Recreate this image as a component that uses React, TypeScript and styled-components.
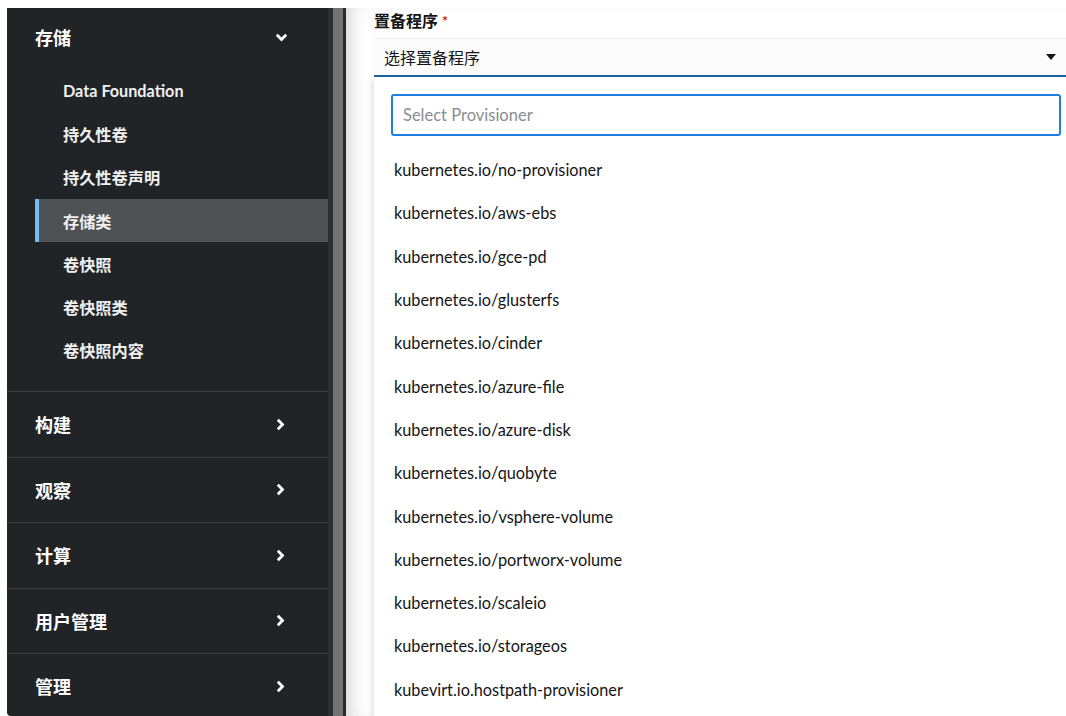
import React from 'react'
import styled, { createGlobalStyle } from 'styled-components'

const FONT = `'Lato', 'Noto Sans CJK SC', sans-serif`

const PROVISIONERS = [
  'kubernetes.io/no-provisioner',
  'kubernetes.io/aws-ebs',
  'kubernetes.io/gce-pd',
  'kubernetes.io/glusterfs',
  'kubernetes.io/cinder',
  'kubernetes.io/azure-file',
  'kubernetes.io/azure-disk',
  'kubernetes.io/quobyte',
  'kubernetes.io/vsphere-volume',
  'kubernetes.io/portworx-volume',
  'kubernetes.io/scaleio',
  'kubernetes.io/storageos',
  'kubevirt.io.hostpath-provisioner'
]

const STORAGE_LINKS = ['Data Foundation', '持久性卷', '持久性卷声明', '存储类', '卷快照', '卷快照类', '卷快照内容']
const ACTIVE_LINK = '存储类'
const SECTIONS = ['构建', '观察', '计算', '用户管理', '管理']

const GlobalStyle = createGlobalStyle`
  html, body {
    margin: 0;
    background: #fff;
    font-family: ${FONT};
    overflow: hidden;
  }
`

const Layout = styled.div`
  display: flex;
  height: 716px;
  padding: 8px 0 0 7px;
  box-sizing: border-box;
`

const SideArea = styled.div`
  display: flex;
  flex-shrink: 0;
  background: #212427;
  border-bottom-left-radius: 4px;
`

const Nav = styled.nav`
  width: 321px;
  display: flex;
  flex-direction: column;
`

// the nav's scrollbar, drawn as a track with a full-height thumb
const ScrollTrack = styled.div`
  width: 18px;
  display: flex;
  background: #2c2f32;
  padding-left: 5px;
  box-sizing: border-box;
`

const ScrollThumb = styled.div`
  width: 10px;
  background: #737373;
  border-right: 3px solid #2a2b2c;
`

const Group = styled.div`
  display: flex;
  flex-direction: column;
  padding-bottom: 19px;
`

const GroupHeader = styled.div`
  height: 58px;
  display: flex;
  align-items: center;
  justify-content: space-between;
  padding: 0 40px 0 28px;
  color: #fff;
  font-size: 18px;
  font-weight: 700;
`

const SubList = styled.ul`
  list-style: none;
  margin: 3px 0 0 28px;
  padding: 0;
`

const SubItem = styled.li<{ $active?: boolean }>`
  height: 43.3px;
  display: flex;
  align-items: center;
  padding-left: 24px;
  box-sizing: border-box;
  color: #f0f0f0;
  font-size: 16.2px;
  font-weight: 700;
  background: ${(p) => (p.$active ? '#4f5255' : 'transparent')};
  border-left: 4px solid ${(p) => (p.$active ? '#73bcf7' : 'transparent')};
`

const Section = styled.div`
  height: 65.5px;
  flex-shrink: 0;
  display: flex;
  align-items: center;
  justify-content: space-between;
  padding: 0 43px 0 28px;
  border-top: 1px solid #3c3f42;
  box-sizing: border-box;
  color: #fff;
  font-size: 18px;
  font-weight: 700;
`

const Main = styled.main`
  flex: 1;
  min-width: 0;
  padding-left: 28px;
  box-shadow: inset 14px 0 18px -10px rgba(0, 0, 0, 0.18);
  display: flex;
  flex-direction: column;
`

const Label = styled.div`
  height: 24px;
  display: flex;
  align-items: center;
  gap: 4px;
  font-size: 16px;
  font-weight: 700;
  color: #151515;
`

const Required = styled.span`
  color: #c9190b;
  font-size: 14px;
`

const Toggle = styled.div`
  margin-top: 6px;
  height: 39px;
  display: flex;
  align-items: center;
  justify-content: space-between;
  padding: 0 10px;
  background: #fcfcfc;
  border-top: 1px solid #f0f0f0;
  border-bottom: 2px solid #1f63a8;
  box-sizing: border-box;
  font-size: 16px;
  color: #151515;
`

const Menu = styled.div`
  flex: 1;
  background: #fff;
  box-shadow: -2px 2px 6px rgba(0, 0, 0, 0.12);
  display: flex;
  flex-direction: column;
  padding-top: 17px;
`

const SearchWrap = styled.div`
  padding: 0 5px 12px 17px;
`

const Search = styled.input`
  width: 100%;
  height: 42px;
  box-sizing: border-box;
  border: 2px solid #1e7fe0;
  border-radius: 3px;
  padding: 0 10px;
  font-family: ${FONT};
  font-size: 16.5px;
  color: #151515;
  outline: none;
  &::placeholder {
    color: #8a8d90;
  }
`

const Options = styled.ul`
  list-style: none;
  margin: 0;
  padding: 0;
`

const Option = styled.li`
  height: 43.3px;
  display: flex;
  align-items: center;
  padding-left: 20px;
  font-size: 16.3px;
  color: #151515;
`

const ChevronDown = () => (
  <svg width="13" height="9" viewBox="0 0 13 9">
    <path d="M1.8 1.8 L6.5 6.5 L11.2 1.8" fill="none" stroke="#fff" strokeWidth="2.8" />
  </svg>
)

const ChevronRight = () => (
  <svg width="9" height="13" viewBox="0 0 9 13">
    <path d="M1.8 1.8 L6.5 6.5 L1.8 11.2" fill="none" stroke="#fff" strokeWidth="2.8" />
  </svg>
)

const Caret = () => (
  <svg width="10" height="6" viewBox="0 0 10 6">
    <path d="M0 0 H10 L5 6 Z" fill="#151515" />
  </svg>
)

const App = () => {
  return (
    <>
      <GlobalStyle />
      <Layout>
        <SideArea>
          <Nav>
            <Group>
              <GroupHeader>
                存储
                <ChevronDown />
              </GroupHeader>
              <SubList>
                {STORAGE_LINKS.map((link) => (
                  <SubItem key={link} $active={link === ACTIVE_LINK}>
                    {link}
                  </SubItem>
                ))}
              </SubList>
            </Group>
            {SECTIONS.map((title) => (
              <Section key={title}>
                {title}
                <ChevronRight />
              </Section>
            ))}
          </Nav>
          <ScrollTrack>
            <ScrollThumb />
          </ScrollTrack>
        </SideArea>
        <Main>
          <Label>
            置备程序
            <Required>*</Required>
          </Label>
          <Toggle>
            选择置备程序
            <Caret />
          </Toggle>
          <Menu>
            <SearchWrap>
              <Search placeholder="Select Provisioner" />
            </SearchWrap>
            <Options>
              {PROVISIONERS.map((name) => (
                <Option key={name}>{name}</Option>
              ))}
            </Options>
          </Menu>
        </Main>
      </Layout>
    </>
  )
}

export default App
